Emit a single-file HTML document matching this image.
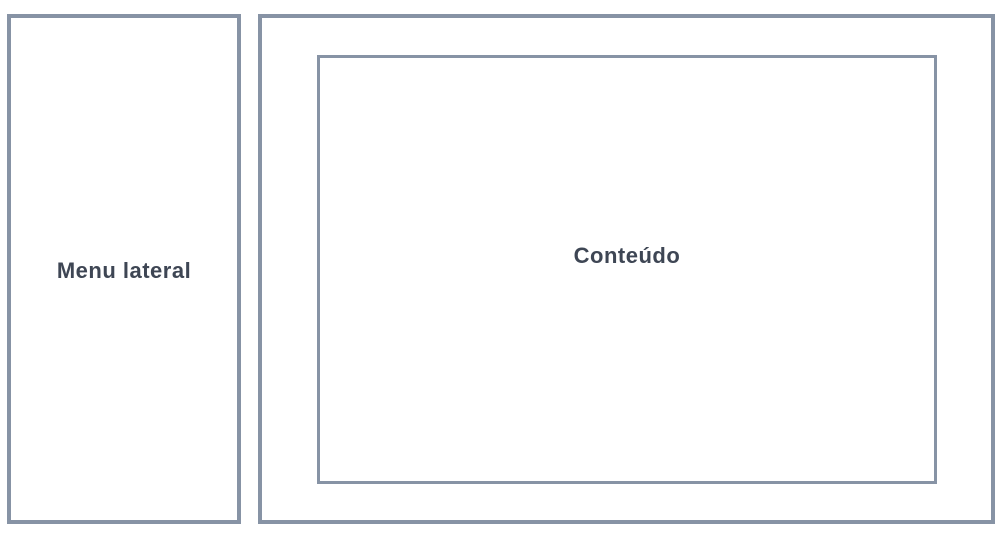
<!DOCTYPE html>
<html><head><style>
html,body{margin:0;padding:0;width:998px;height:544px;background:#fff;overflow:hidden;font-family:"Liberation Sans",sans-serif}
.b{position:absolute;box-sizing:border-box;border:4px solid #8793a5}
.t{position:absolute;color:#3e4654;font-size:22px;font-weight:bold;letter-spacing:0.5px;text-align:center;line-height:26px}
</style></head><body>
<div class="b" style="left:7px;top:14px;width:234px;height:510px"></div>
<div class="b" style="left:258px;top:14px;width:737px;height:510px"></div>
<div class="b" style="left:317px;top:55px;width:620px;height:429px;border-width:3px"></div>
<div class="t" style="left:7px;width:234px;top:258px">Menu lateral</div>
<div class="t" style="left:317px;width:620px;top:243px">Conteúdo</div>
</body></html>
